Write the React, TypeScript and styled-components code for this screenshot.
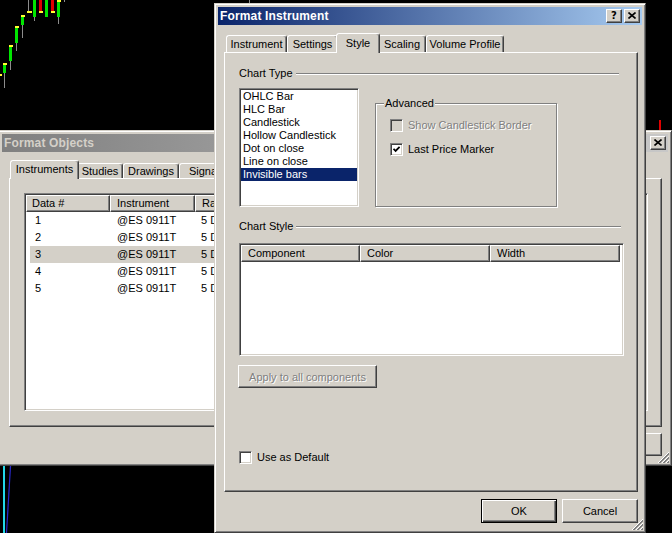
import React from "react";
import styled, { createGlobalStyle } from "styled-components";

const Global = createGlobalStyle`
  html, body { margin: 0; padding: 0; background: #000; }
  body { font-family: "Liberation Sans", Arial, sans-serif; font-size: 11px; color: #000; }
  *, *::before, *::after { box-sizing: border-box; }
`;

const Desktop = styled.div`
  position: relative;
  width: 672px;
  height: 533px;
  overflow: hidden;
  background: #000;
`;

const ChartLayer = styled.svg`
  position: absolute;
  left: 0;
  top: 0;
  z-index: 0;
`;

const Win = styled.div<{ $x: number; $y: number; $w: number; $h: number; $z: number }>`
  position: absolute;
  left: ${(p) => p.$x}px;
  top: ${(p) => p.$y}px;
  width: ${(p) => p.$w}px;
  height: ${(p) => p.$h}px;
  z-index: ${(p) => p.$z};
  background: #d4d0c8;
  border: 1px solid;
  border-color: #d4d0c8 #404040 #404040 #d4d0c8;
  box-shadow: inset 1px 1px #fff, inset -1px -1px #808080;
  padding: 3px;
  display: flex;
  flex-direction: column;
  overflow: hidden;
`;

const TitleBar = styled.div<{ $active?: boolean }>`
  flex: none;
  height: 18px;
  display: flex;
  align-items: center;
  padding: 0 2px 0 2px;
  background: ${(p) =>
    p.$active
      ? "linear-gradient(to right, #0a246a, #a6caf0)"
      : "linear-gradient(to right, #808080, #c8c8c8)"};
  color: ${(p) => (p.$active ? "#fff" : "#d4d0c8")};
  font-weight: bold;
  font-size: 12px;
  letter-spacing: 0.15px;
`;

const TitleText = styled.span`
  flex: 1;
  white-space: nowrap;
  overflow: hidden;
`;

const TitleButtons = styled.div`
  display: flex;
  gap: 2px;
`;

const CaptionButton = styled.div`
  width: 16px;
  height: 14px;
  background: #d4d0c8;
  border: 1px solid;
  border-color: #fff #404040 #404040 #fff;
  box-shadow: inset -1px -1px #808080;
  display: flex;
  align-items: center;
  justify-content: center;
  color: #000;
  font-family: "DejaVu Sans", sans-serif;
  font-size: 10px;
  font-weight: bold;
  line-height: 1;
  padding-bottom: 1px;
`;

const TabStrip = styled.div<{ $pad: number; $h: number; $ml: number }>`
  flex: none;
  position: relative;
  z-index: 1;
  display: flex;
  align-items: flex-end;
  height: ${(p) => p.$h}px;
  margin-left: ${(p) => p.$ml}px;
  padding-left: ${(p) => p.$pad}px;
`;

const Tab = styled.div<{ $w: number; $h: number; $active?: boolean }>`
  flex: none;
  position: relative;
  width: ${(p) => (p.$active ? p.$w + 4 : p.$w)}px;
  height: ${(p) => p.$h}px;
  margin: ${(p) => (p.$active ? "0 -2px -1px -2px" : "0")};
  z-index: ${(p) => (p.$active ? 2 : 1)};
  background: #d4d0c8;
  border: 1px solid;
  border-bottom: none;
  border-color: #fff #404040 transparent #fff;
  border-radius: 3px 3px 0 0;
  box-shadow: inset -1px 0 #808080;
  display: flex;
  align-items: center;
  justify-content: center;
  white-space: nowrap;
  padding-bottom: ${(p) => (p.$active ? 2 : 0)}px;
`;

const TabPanel = styled.div<{ $h: number; $ml: number; $mr: number; $pt: number; $pl: number; $pr: number }>`
  flex: none;
  height: ${(p) => p.$h}px;
  margin: 0 ${(p) => p.$mr}px 0 ${(p) => p.$ml}px;
  padding: ${(p) => p.$pt}px ${(p) => p.$pr}px 0 ${(p) => p.$pl}px;
  background: #d4d0c8;
  border: 1px solid;
  border-color: #fff #404040 #404040 #fff;
  box-shadow: inset -1px -1px #808080;
  display: flex;
  flex-direction: column;
  overflow: hidden;
`;

const SectionHeader = styled.div<{ $mt: number; $end: number }>`
  display: flex;
  align-items: center;
  gap: 3px;
  height: 13px;
  line-height: 13px;
  margin-top: ${(p) => p.$mt}px;
  padding-right: ${(p) => p.$end}px;
  white-space: nowrap;
`;

const EtchedLine = styled.div`
  flex: 1;
  height: 2px;
  border-top: 1px solid #808080;
  border-bottom: 1px solid #fff;
  margin-top: 1px;
`;

const TypeRow = styled.div`
  display: flex;
  align-items: flex-end;
  margin-top: 8px;
`;

const Sunken = styled.div`
  background: #fff;
  border: 1px solid;
  border-color: #808080 #fff #fff #808080;
  box-shadow: inset 1px 1px #404040, inset -1px -1px #d4d0c8;
  padding: 1px;
`;

const ListBox = styled(Sunken)`
  flex: none;
  width: 120px;
  height: 119px;
`;

const ListItem = styled.div<{ $sel?: boolean }>`
  height: 13px;
  line-height: 13px;
  padding-left: 2px;
  white-space: nowrap;
  background: ${(p) => (p.$sel ? "#0a246a" : "transparent")};
  color: ${(p) => (p.$sel ? "#fff" : "#000")};
`;

const GroupBox = styled.div`
  position: relative;
  flex: none;
  width: 182px;
  height: 104px;
  margin-left: 16px;
  border: 1px solid #808080;
  box-shadow: inset 1px 1px #fff, 1px 1px 0 #fff;
  padding: 15px 0 0 14px;
  display: flex;
  flex-direction: column;
  gap: 11px;
`;

const Legend = styled.span`
  position: absolute;
  left: 8px;
  top: -7px;
  padding: 0 1px;
  line-height: 13px;
  background: #d4d0c8;
`;

const CheckRow = styled.div<{ $mt?: number }>`
  display: flex;
  align-items: center;
  gap: 5px;
  height: 13px;
  line-height: 13px;
  margin-top: ${(p) => p.$mt ?? 0}px;
  white-space: nowrap;
`;

const CheckBox = styled.div<{ $disabled?: boolean }>`
  flex: none;
  width: 13px;
  height: 13px;
  background: ${(p) => (p.$disabled ? "#d4d0c8" : "#fff")};
  border: 1px solid;
  border-color: #808080 #fff #fff #808080;
  box-shadow: inset 1px 1px #404040, inset -1px -1px #d4d0c8;
  display: flex;
  align-items: center;
  justify-content: center;
`;

const Label = styled.span<{ $disabled?: boolean }>`
  color: ${(p) => (p.$disabled ? "#808080" : "#000")};
  text-shadow: ${(p) => (p.$disabled ? "1px 1px 0 #fff" : "none")};
`;

const ListView = styled(Sunken)<{ $w: number; $h: number; $mt: number }>`
  flex: none;
  width: ${(p) => p.$w}px;
  height: ${(p) => p.$h}px;
  margin-top: ${(p) => p.$mt}px;
  display: flex;
  flex-direction: column;
  overflow: hidden;
`;

const HeaderRow = styled.div`
  display: flex;
  height: 17px;
  flex: none;
`;

const HeaderCell = styled.div<{ $w: number; $pl: number }>`
  flex: none;
  width: ${(p) => p.$w}px;
  height: 17px;
  line-height: 15px;
  padding-left: ${(p) => p.$pl}px;
  background: #d4d0c8;
  border: 1px solid;
  border-color: #fff #404040 #404040 #fff;
  box-shadow: inset -1px -1px #808080;
  white-space: nowrap;
  overflow: hidden;
`;

const DataRow = styled.div<{ $sel?: boolean }>`
  display: flex;
  height: 17px;
  line-height: 17px;
  margin-left: 4px;
  background: ${(p) => (p.$sel ? "#d4d0c8" : "transparent")};
  white-space: nowrap;
`;

const DataCell = styled.div<{ $w: number; $pl: number }>`
  flex: none;
  width: ${(p) => p.$w}px;
  padding-left: ${(p) => p.$pl}px;
  overflow: hidden;
`;

const Button = styled.div<{ $w: number; $default?: boolean; $disabled?: boolean; $ml?: number; $mt?: number }>`
  flex: none;
  width: ${(p) => p.$w}px;
  height: ${(p) => (p.$default ? 24 : 23)}px;
  margin-left: ${(p) => p.$ml ?? 0}px;
  margin-top: ${(p) => p.$mt ?? 0}px;
  background: #d4d0c8;
  border: 1px solid;
  border-color: ${(p) => (p.$default ? "#000" : "#fff #404040 #404040 #fff")};
  box-shadow: ${(p) =>
    p.$default
      ? "inset 1px 1px #fff, inset -1px -1px #404040, inset -2px -2px #808080"
      : "inset -1px -1px #808080"};
  display: flex;
  align-items: center;
  justify-content: center;
  white-space: nowrap;
  color: ${(p) => (p.$disabled ? "#808080" : "#000")};
  text-shadow: ${(p) => (p.$disabled ? "1px 1px 0 #fff" : "none")};
`;

const ButtonRow = styled.div<{ $mt: number; $mr: number }>`
  display: flex;
  justify-content: flex-end;
  gap: 5px;
  margin-top: ${(p) => p.$mt}px;
  margin-right: ${(p) => p.$mr}px;
`;

const Grip = styled.svg`
  position: absolute;
  right: 2px;
  bottom: 2px;
`;

const SizeGrip = () => (
  <Grip width="12" height="12" viewBox="0 0 12 12">
    {[0, 4, 8].map((o) => (
      <g key={o}>
        <line x1={1 + o} y1="12" x2="12" y2={1 + o} stroke="#fff" strokeWidth="1" />
        <line x1={2 + o} y1="12" x2="12" y2={2 + o} stroke="#808080" strokeWidth="1" />
        <line x1={3 + o} y1="12" x2="12" y2={3 + o} stroke="#808080" strokeWidth="1" />
      </g>
    ))}
  </Grip>
);

const CloseGlyph = () => (
  <svg width="8" height="7" viewBox="0 0 8 7">
    <path d="M0.5 0.5 L7.5 6.5 M7.5 0.5 L0.5 6.5" stroke="#000" strokeWidth="1.6" />
  </svg>
);

const CheckGlyph = () => (
  <svg width="7" height="7" viewBox="0 0 7 7">
    <path d="M0.5 2.8 L2.6 4.9 L6.6 0.9" stroke="#000" strokeWidth="1.8" fill="none" />
  </svg>
);

const Y = "#ffff30";
const G = "#00e600";
const R = "#e00000";
const W = "#8c8c8c";

const bars: [number, number, number, number, string][] = [
  [0, 74, 2, 2, Y],
  [4, 72, 1, 16, W], [3, 65, 3, 8, G], [3, 63, 4, 2, Y],
  [10, 61, 1, 9, W], [9, 46, 3, 15, G], [9, 45, 4, 2, Y],
  [16, 43, 1, 8, W], [15, 27, 3, 16, G], [15, 26, 4, 2, Y],
  [22, 24, 1, 14, W], [21, 16, 3, 9, G], [21, 15, 4, 2, Y],
  [28, 0, 1, 11, W], [27, 11, 5, 2, Y],
  [34, 16, 1, 5, W], [33, 0, 3, 17, G],
  [39, 0, 3, 11, R], [39, 11, 4, 2, Y],
  [45, 0, 3, 17, G],
  [51, 0, 3, 11, R], [51, 11, 4, 2, Y],
  [58, 16, 1, 8, W], [57, 1, 3, 16, G], [57, 0, 4, 2, Y],
  [64, 0, 1, 2, W],
  [249, 0, 1, 3, W],
  [659, 120, 2, 10, R],
  [3, 466, 2, 67, "#22d8e8"],
];

const chartTypes = [
  "OHLC Bar",
  "HLC Bar",
  "Candlestick",
  "Hollow Candlestick",
  "Dot on close",
  "Line on close",
  "Invisible bars",
];

const instruments = [1, 2, 3, 4, 5];

export default function App() {
  return (
    <>
      <Global />
      <Desktop>
        <ChartLayer width="672" height="533" viewBox="0 0 672 533">
          {bars.map(([x, y, w, h, c], i) => (
            <rect key={i} x={x} y={y} width={w} height={h} fill={c} />
          ))}
          <line x1="10.5" y1="466" x2="6.5" y2="533" stroke="#2828c8" strokeWidth="1.2" />
        </ChartLayer>

        {/* Format Objects (background window) */}
        <Win $x={-2} $y={130} $w={674} $h={336} $z={1}>
          <TitleBar>
            <TitleText>Format Objects</TitleText>
            <TitleButtons>
              <CaptionButton>
                <CloseGlyph />
              </CaptionButton>
            </TitleButtons>
          </TitleBar>
          <TabStrip $h={18} $ml={7} $pad={3} style={{ marginTop: 8 }}>
            <Tab $w={65} $h={19} $active>
              Instruments
            </Tab>
            <Tab $w={46} $h={15}>
              Studies
            </Tab>
            <Tab $w={56} $h={15}>
              Drawings
            </Tab>
            <Tab $w={56} $h={15}>
              Signals
            </Tab>
          </TabStrip>
          <TabPanel $h={249} $ml={7} $mr={6} $pt={14} $pl={14} $pr={13}>
            <ListView $w={624} $h={218} $mt={0}>
              <HeaderRow>
                <HeaderCell $w={84} $pl={5}>Data #</HeaderCell>
                <HeaderCell $w={85} $pl={6}>Instrument</HeaderCell>
                <HeaderCell $w={100} $pl={6}>Range</HeaderCell>
              </HeaderRow>
              {instruments.map((n) => (
                <DataRow key={n} $sel={n === 3}>
                  <DataCell $w={80} $pl={5}>{n}</DataCell>
                  <DataCell $w={85} $pl={7}>@ES 0911T</DataCell>
                  <DataCell $w={100} $pl={6}>5 Days</DataCell>
                </DataRow>
              ))}
            </ListView>
          </TabPanel>
          <ButtonRow $mt={6} $mr={6}>
            <Button $w={75}>Close</Button>
          </ButtonRow>
          <SizeGrip />
        </Win>

        {/* Format Instrument (active dialog) */}
        <Win $x={214} $y={3} $w={432} $h={530} $z={2}>
          <TitleBar $active>
            <TitleText>Format Instrument</TitleText>
            <TitleButtons>
              <CaptionButton>?</CaptionButton>
              <CaptionButton>
                <CloseGlyph />
              </CaptionButton>
            </TitleButtons>
          </TitleBar>
          <TabStrip $h={19} $ml={6} $pad={2} style={{ marginTop: 8 }}>
            <Tab $w={61} $h={17}>Instrument</Tab>
            <Tab $w={51} $h={17}>Settings</Tab>
            <Tab $w={40} $h={20} $active>
              Style
            </Tab>
            <Tab $w={48} $h={17}>Scaling</Tab>
            <Tab $w={78} $h={17}>Volume Profile</Tab>
          </TabStrip>
          <TabPanel $h={440} $ml={6} $mr={4} $pt={0} $pl={14} $pr={13}>
            <SectionHeader $mt={14} $end={5}>
              Chart Type
              <EtchedLine />
            </SectionHeader>
            <TypeRow>
              <ListBox>
                {chartTypes.map((t) => (
                  <ListItem key={t} $sel={t === "Invisible bars"}>
                    {t}
                  </ListItem>
                ))}
              </ListBox>
              <GroupBox>
                <Legend>Advanced</Legend>
                <CheckRow>
                  <CheckBox $disabled />
                  <Label $disabled>Show Candlestick Border</Label>
                </CheckRow>
                <CheckRow>
                  <CheckBox>
                    <CheckGlyph />
                  </CheckBox>
                  <Label>Last Price Marker</Label>
                </CheckRow>
              </GroupBox>
            </TypeRow>
            <SectionHeader $mt={13} $end={3}>
              Chart Style
              <EtchedLine />
            </SectionHeader>
            <ListView $w={385} $h={113} $mt={10}>
              <HeaderRow>
                <HeaderCell $w={119} $pl={6}>Component</HeaderCell>
                <HeaderCell $w={130} $pl={6}>Color</HeaderCell>
                <HeaderCell $w={130} $pl={6}>Width</HeaderCell>
              </HeaderRow>
            </ListView>
            <Button $w={139} $disabled $ml={-1} $mt={9}>
              Apply to all components
            </Button>
            <CheckRow $mt={63}>
              <CheckBox />
              <Label>Use as Default</Label>
            </CheckRow>
          </TabPanel>
          <ButtonRow $mt={7} $mr={4}>
            <Button $w={76} $default>
              OK
            </Button>
            <Button $w={76} style={{ height: 24 }}>
              Cancel
            </Button>
          </ButtonRow>
          <SizeGrip />
        </Win>
      </Desktop>
    </>
  );
}
